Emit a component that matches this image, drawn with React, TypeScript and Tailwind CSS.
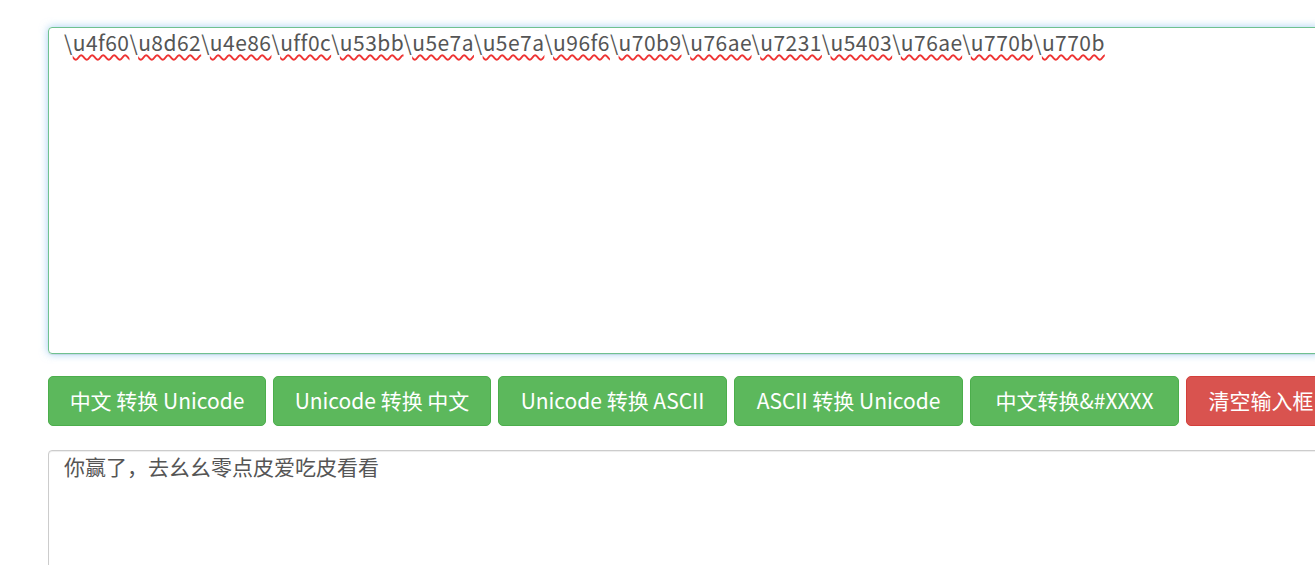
import React from "react";

const CODES = [
  "u4f60", "u8d62", "u4e86", "uff0c", "u53bb", "u5e7a", "u5e7a", "u96f6",
  "u70b9", "u76ae", "u7231", "u5403", "u76ae", "u770b", "u770b",
];

const BUTTONS = [
  { label: "中文 转换 Unicode", w: "w-[218px]", color: "green" },
  { label: "Unicode 转换 中文", w: "w-[218px]", color: "green" },
  { label: "Unicode 转换 ASCII", w: "w-[229px]", color: "green" },
  { label: "ASCII 转换 Unicode", w: "w-[229px]", color: "green" },
  { label: "中文转换&#XXXX", w: "w-[209px]", color: "green" },
  { label: "清空输入框", w: "w-[150px]", color: "red" },
];

export default function App() {
  return (
    <div className="h-[565px] w-full overflow-hidden bg-white font-['Noto_Sans_CJK_SC',sans-serif] text-[21px] text-[#555]">
      <div className="w-[1320px] pl-[48px] pt-[27px]">
        {/* input area (focused) */}
        <div className="h-[327px] w-full rounded-l-[4px] border border-[#6fc18f] px-[15px] pt-0 leading-[28px] tracking-[0.45px] shadow-[0_1px_1px_rgba(0,0,0,0.075),0_0_8px_rgba(102,175,233,0.6)]">
          {CODES.map((c, i) => (
            <React.Fragment key={i}>
              \
              <span className="underline decoration-wavy decoration-[#e33] decoration-[1.5px] underline-offset-[3px]">
                {c}
              </span>
            </React.Fragment>
          ))}
        </div>

        {/* actions */}
        <div className="mt-[22px] flex gap-[7px]">
          {BUTTONS.map((b) => (
            <button
              key={b.label}
              className={`h-[50px] shrink-0 whitespace-nowrap rounded-[5px] border text-[21px] text-white ${b.w} ${
                b.color === "red"
                  ? "border-[#d43f3a] bg-[#d9534f]"
                  : "border-[#4cae4c] bg-[#5cb85c]"
              }`}
            >
              {b.label}
            </button>
          ))}
        </div>

        {/* output area */}
        <textarea
          readOnly
          spellCheck={false}
          defaultValue="你赢了，去幺幺零点皮爱吃皮看看"
          className="mt-[24px] block h-[200px] w-full resize-none rounded-l-[4px] border border-[#ccc] px-[15px] pt-[1px] leading-[28px] text-[#555] shadow-[inset_0_1px_1px_rgba(0,0,0,0.075)] outline-none"
        />
      </div>
    </div>
  );
}
